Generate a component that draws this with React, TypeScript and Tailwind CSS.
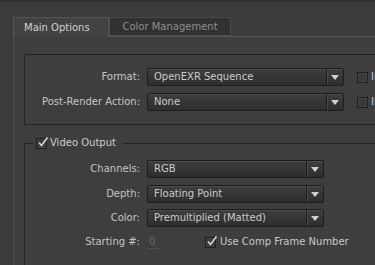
import React from "react";

function Arrow() {
  return (
    <svg width="8" height="5" viewBox="0 0 8 5">
      <path d="M0 0 H8 L4 5 Z" fill="#cfcfcf" />
    </svg>
  );
}

function Dropdown({ value, width }: { value: string; width: string }) {
  return (
    <div
      className={`flex h-[18px] ${width} rounded-[2px] border border-[#1c1c1c] bg-gradient-to-b from-[#3e3e3e] to-[#2e2e2e] shadow-[inset_0_1px_0_#4c4c4c]`}
    >
      <div className="flex flex-1 items-center pl-[6px] text-[10px] leading-none text-[#cacaca]">{value}</div>
      <div className="flex w-[17px] items-center justify-center border-l border-[#1c1c1c] shadow-[inset_1px_0_0_#4a4a4a]">
        <Arrow />
      </div>
    </div>
  );
}

function Check({ checked }: { checked?: boolean }) {
  return (
    <div className="relative h-[11px] w-[11px] shrink-0 border border-[#1e1e1e] bg-[#3a3a3a] shadow-[inset_0_0_0_1px_#444]">
      {checked && (
        <svg className="absolute left-[0px] top-[-3px]" width="12" height="12" viewBox="0 0 12 12">
          <path d="M2 6.5 L4.5 9.5 L10.5 1.5" fill="none" stroke="#d4d4d4" strokeWidth="1.6" />
        </svg>
      )}
    </div>
  );
}

function Label({ text }: { text: string }) {
  return <div className="w-[115px] shrink-0 text-right text-[10px] leading-none text-[#c4c4c4]">{text}</div>;
}

export default function App() {
  return (
    <div className="h-[265px] w-[375px] overflow-hidden bg-[#3b3b3b] font-['DejaVu_Sans',sans-serif]">
      <div className="h-[2px] bg-[#2d3136]" />
      <div className="mt-[15px] flex h-[20px] items-end pl-[13px]">
        <div className="flex h-[20px] w-[96px] items-center border-l border-r border-t border-[#565656] bg-[#424242] pb-[1px] pl-[10px] text-[10px] text-[#d0d0d0]">
          Main Options
        </div>
        <div className="flex h-[20px] w-[122px] flex-col border-b border-[#585858]">
          <div className="flex h-[19px] items-center justify-center border border-[#4a4a4a] bg-[#313131] text-[10px] text-[#8e8e8e]">
            Color Management
          </div>
        </div>
        <div className="h-[20px] flex-1 border-b border-[#585858]" />
      </div>
      <div className="ml-[13px] w-[420px] border-l border-[#4c4c4c] bg-[#3e3e3e] pl-[10px] pt-[17px]">
        <div className="flex flex-col gap-[7px] border border-[#232323] pb-[13px] pt-[13px]">
          <div className="flex items-center">
            <Label text="Format:" />
            <div className="ml-[7px]">
              <Dropdown value="OpenEXR Sequence" width="w-[197px]" />
            </div>
            <div className="ml-[13px]">
              <Check />
            </div>
            <div className="ml-[3px] whitespace-nowrap text-[10px] leading-none text-[#c4c4c4]">Include Project Link</div>
          </div>
          <div className="flex items-center">
            <Label text="Post-Render Action:" />
            <div className="ml-[7px]">
              <Dropdown value="None" width="w-[197px]" />
            </div>
            <div className="ml-[13px]">
              <Check />
            </div>
            <div className="ml-[3px] whitespace-nowrap text-[10px] leading-none text-[#c4c4c4]">Include Source XMP Metadata</div>
          </div>
        </div>
        <fieldset className="mt-[12px] border border-[#232323] pb-[20px] pt-[11px]">
          <legend className="ml-[8px] flex h-[12px] items-center pl-[3px] pr-[7px]">
            <Check checked />
            <span className="ml-[3px] text-[10px] leading-none text-[#cccccc]">Video Output</span>
          </legend>
          <div className="flex flex-col">
            <div className="flex items-center">
              <Label text="Channels:" />
              <div className="ml-[7px]">
                <Dropdown value="RGB" width="w-[177px]" />
              </div>
            </div>
            <div className="mt-[7px] flex items-center">
              <Label text="Depth:" />
              <div className="ml-[7px]">
                <Dropdown value="Floating Point" width="w-[177px]" />
              </div>
            </div>
            <div className="mt-[6px] flex items-center">
              <Label text="Color:" />
              <div className="ml-[7px]">
                <Dropdown value="Premultiplied (Matted)" width="w-[177px]" />
              </div>
            </div>
            <div className="mt-[6px] flex h-[18px] items-center">
              <Label text="Starting #:" />
              <div className="ml-[9px] w-[12px] border-b border-dotted border-[#5c5c5c] text-[10px] leading-[12px] text-[#686868]">0</div>
              <div className="ml-[44px]">
                <Check checked />
              </div>
              <span className="ml-[4px] text-[10px] leading-none text-[#c8c8c8]">Use Comp Frame Number</span>
            </div>
          </div>
        </fieldset>
      </div>
    </div>
  );
}
